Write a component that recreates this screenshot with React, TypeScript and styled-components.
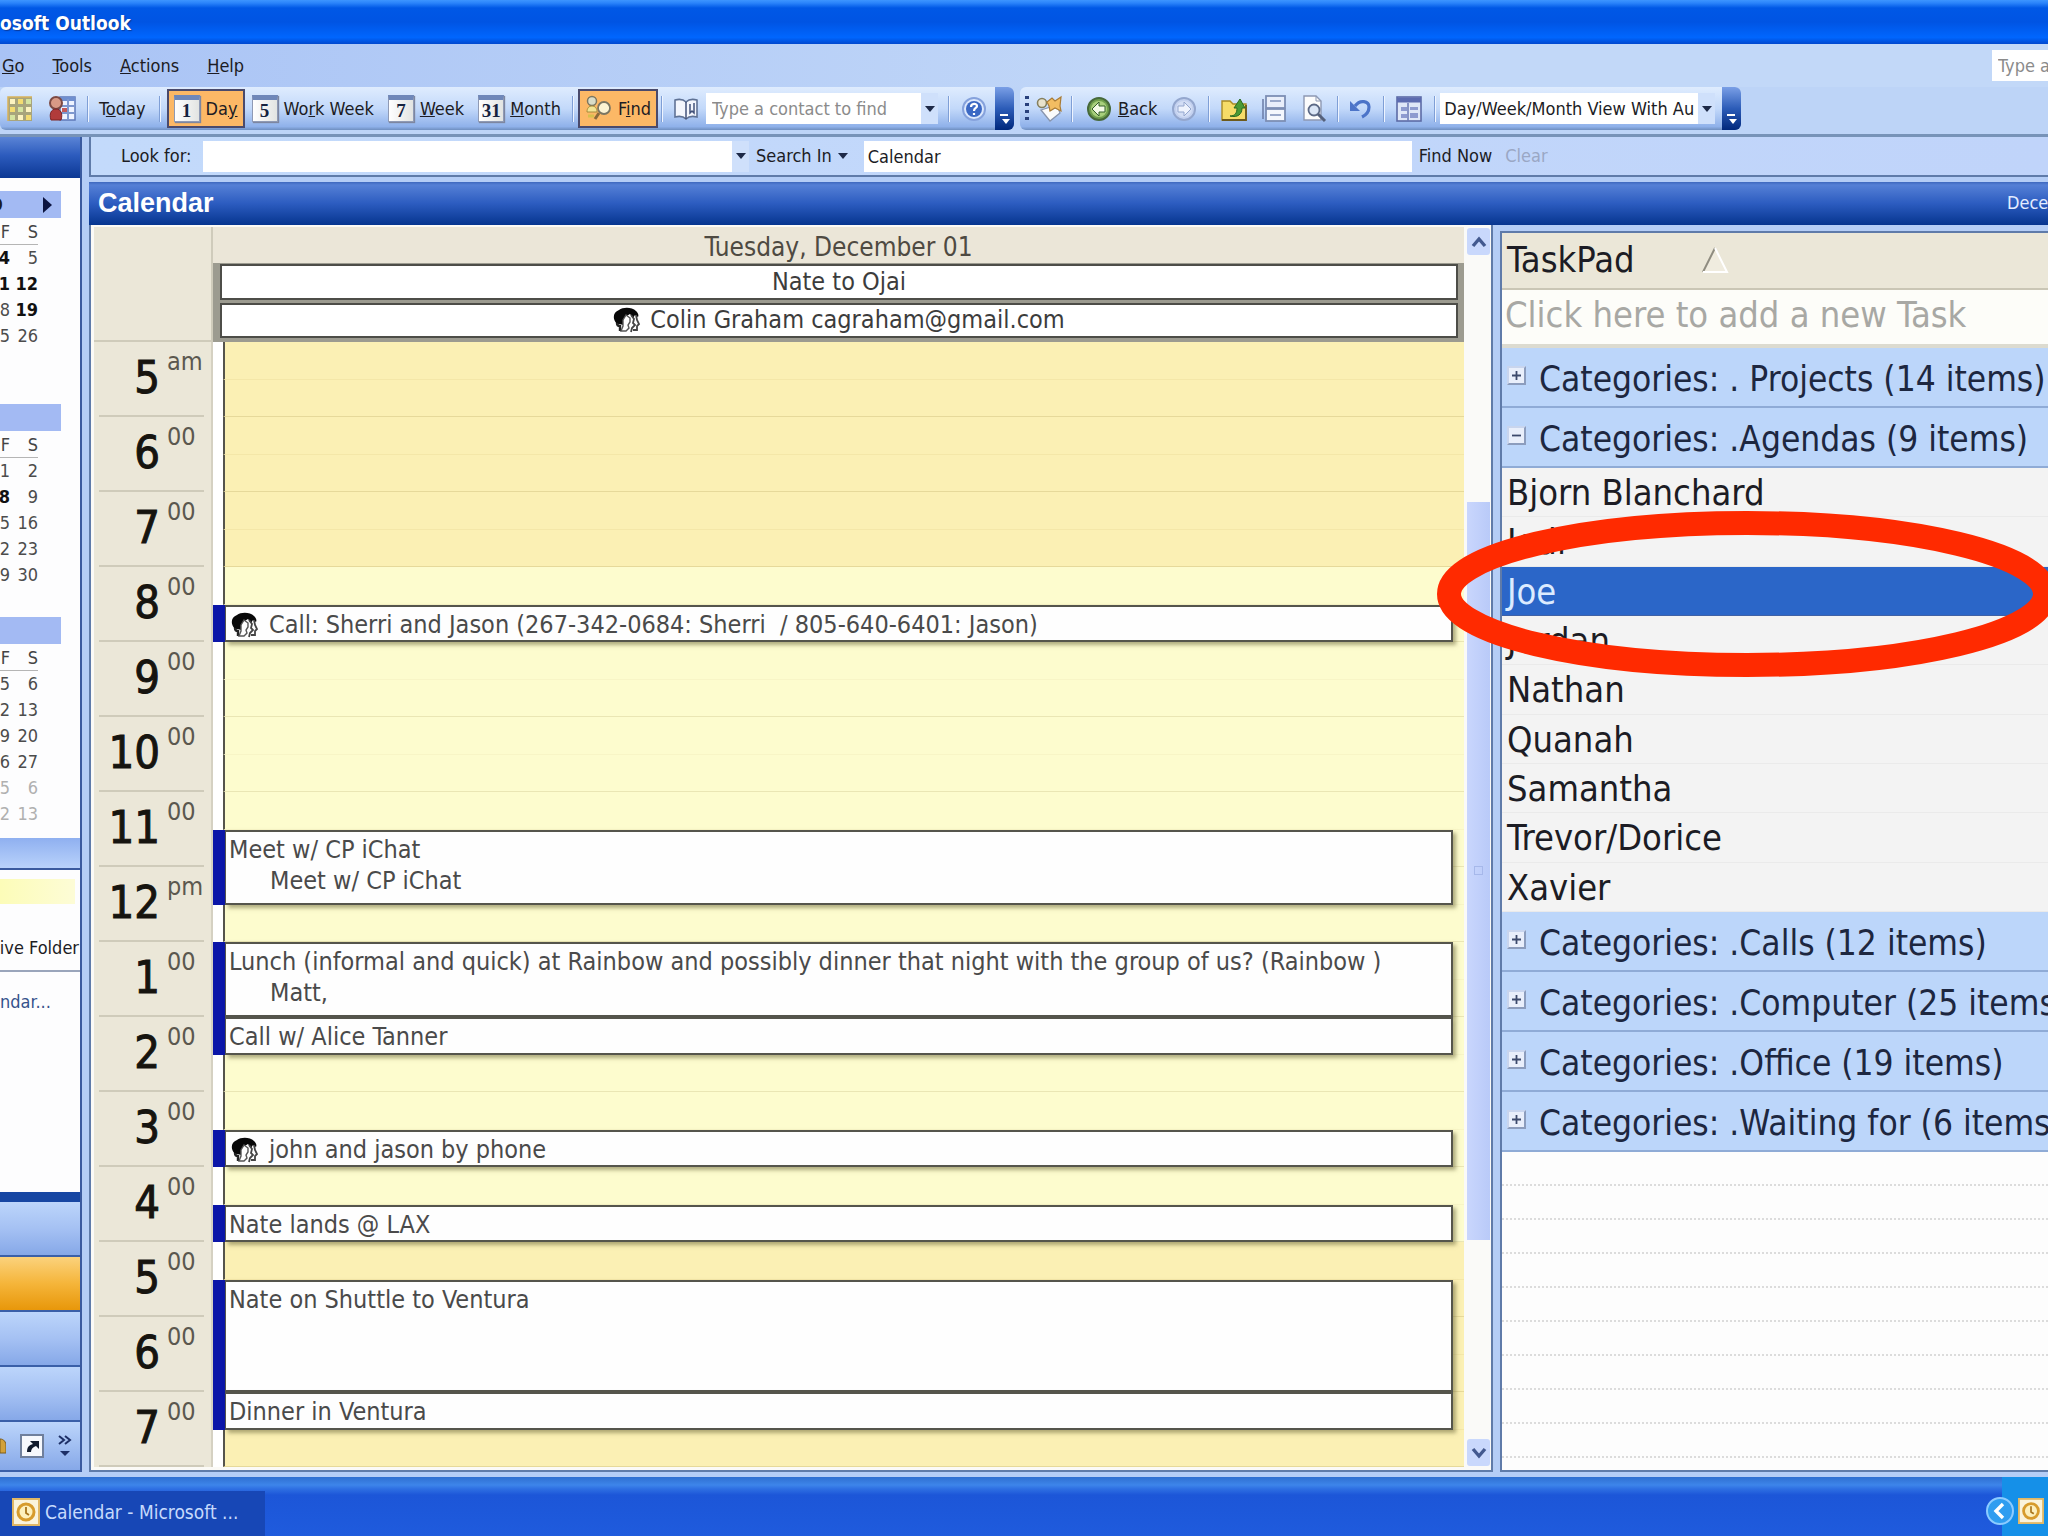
import React from "react";
import styled, { createGlobalStyle, css } from "styled-components";

const ui = `"DejaVu Sans Condensed", "Noto Sans", sans-serif`;

const Global = createGlobalStyle`
  *, *::before, *::after { box-sizing: border-box; }
  body { margin: 0; overflow: hidden; background: #b9d2f8; font-family: ${ui}; color: #1c1c24; }
  button, input, select { font: inherit; color: inherit; margin: 0; border: 0; border-radius: 0; outline: 0; }
  button { background: none; padding: 0; }
  table { border-collapse: collapse; }
  svg { flex: none; }
`;

const Window = styled.div`
  height: 100vh;
  display: flex;
  flex-direction: column;
  overflow: hidden;
  font-size: 18px;
  line-height: 24px;
  white-space: nowrap;
  position: relative;
`;

/* ---------- title, menu, toolbars ---------- */

const TitleBar = styled.header`
  flex: none;
  height: 44px;
  display: flex;
  align-items: center;
  background: linear-gradient(#3d95ff 0, #2a84fb 3px, #0058e6 8px, #0054e3 50%, #0066fe 85%, #0048cf 100%);
`;

const Title = styled.h1`
  margin: 0;
  padding-top: 2px;
  font: bold 19px/24px ${ui};
  color: #fff;
  text-shadow: 1px 1px 1px #0a3a9a;
`;

const MenuBar = styled.nav`
  flex: none;
  height: 43px;
  display: flex;
  align-items: center;
  gap: 28px;
  padding-left: 2px;
  background: linear-gradient(90deg, #a9c3f5, #c2d8f8 60%);
`;

const MenuItem = styled.button`
  height: 28px;
`;

const QuestionBox = styled.input`
  margin-left: auto;
  width: 56px;
  height: 31px;
  padding: 0 0 0 6px;
  background: #fff;
  &::placeholder { color: #8b8b8b; opacity: 1; }
`;

const ToolbarRow = styled.div`
  flex: none;
  height: 50px;
  display: flex;
  align-items: flex-start;
  gap: 6px;
  background: #bdd4f7;
  border-bottom: 3px solid #7793b8;
`;

const Toolbar = styled.div`
  height: 43px;
  display: flex;
  align-items: center;
  border-radius: 6px;
  background: linear-gradient(#dfecfe, #c3d9fa 50%, #8fb1ea 92%, #6f8fc0);
  overflow: hidden;
`;

const Separator = styled.span<{ $gap?: number }>`
  width: 2px;
  height: 26px;
  margin: 0 ${(p) => p.$gap ?? 8}px;
  background: #7f9fd6;
  border-right: 1px solid #eef4ff;
`;

const ToolButton = styled.button<{ $active?: boolean }>`
  height: 39px;
  display: flex;
  align-items: center;
  gap: 6px;
  padding: 0 5px;
  border: 2px solid transparent;
  ${(p) =>
    p.$active &&
    css`
      background: #fcb866;
      border-color: #4a4a6c;
    `}
`;

const DateTile = styled.span`
  width: 26px;
  height: 27px;
  border: 1px solid #8f9ab4;
  border-top: 5px solid #6f87b9;
  background: linear-gradient(90deg, #fff, #e2e4e2);
  font: bold 19px/21px "Liberation Serif", serif;
  text-align: center;
  color: #15233f;
  box-shadow: 1px 1px 1px #7d86a0;
`;

const ComboBox = styled.div<{ $width: number }>`
  width: ${(p) => p.$width}px;
  height: 31px;
  display: flex;
  background: #fff;
`;

const ComboInput = styled.input`
  flex: 1;
  min-width: 0;
  padding: 0 6px;
  background: #fff;
  &::placeholder { color: #8b8b8b; opacity: 1; }
`;

const ComboSelect = styled.select`
  flex: 1;
  min-width: 0;
  padding: 0 4px;
  appearance: none;
  background: #fff;
  overflow: hidden;
`;

const DropButton = styled.button`
  width: 17px;
  display: flex;
  align-items: center;
  justify-content: center;
  background: #cfe0fb;
`;

const Overflow = styled.button`
  align-self: stretch;
  width: 19px;
  margin-left: 7px;
  display: flex;
  align-items: flex-end;
  justify-content: center;
  padding-bottom: 4px;
  background: linear-gradient(#7a9fe6, #2c5cb8 50%, #00287c);
`;

const Grip = styled.span`
  width: 4px;
  height: 26px;
  margin: 0 6px 0 5px;
  background: repeating-linear-gradient(#29417c 0 3px, transparent 3px 7px);
`;

/* ---------- body ---------- */

const Body = styled.div`
  flex: 1;
  min-height: 0;
  display: flex;
  gap: 7px;
  padding-bottom: 5px;
  background: #b4cdf6;
`;

const Sidebar = styled.aside`
  flex: none;
  width: 82px;
  display: flex;
  flex-direction: column;
  border-right: 2px solid #3a5a9f;
  background: #fdfdfe;
  overflow: hidden;
`;

const SidebarHeader = styled.div`
  height: 41px;
  background: linear-gradient(#5a84d6, #2c5bbd 45%, #0c3894);
`;

const Months = styled.div`
  height: 660px;
  padding-top: 13px;
`;

const Month = styled.section`
  width: 61px;
  height: 213px;
`;

const MonthBar = styled.div`
  height: 27px;
  display: flex;
  align-items: center;
  justify-content: flex-end;
  gap: 40px;
  padding-right: 9px;
  background: #a3baf3;
  font-weight: bold;
`;

const MonthTable = styled.table`
  width: 56px;
  margin-left: -18px;
  border-spacing: 0;
  line-height: 22px;
  th { font-weight: normal; height: 26px; padding: 3px 0 0; text-align: right; color: #444; }
  thead { border-bottom: 1px solid #b5b5b5; }
`;

const DayCell = styled.td<{ $bold?: boolean; $dim?: boolean }>`
  height: 26px;
  width: 28px;
  padding: 2px 0 0;
  text-align: right;
  font-weight: ${(p) => (p.$bold ? "bold" : "normal")};
  color: ${(p) => (p.$dim ? "#b0b0b0" : p.$bold ? "#111" : "#4c4c4c")};
`;

const PaneBar = styled.div`
  height: 32px;
  background: linear-gradient(#8fb0f0, #b9d2fb);
  border-bottom: 2px solid #3a5a9f;
`;

const CurrentView = styled.div`
  height: 25px;
  margin: 9px 5px 0 0;
  background: linear-gradient(90deg, #fcfcb8, #fdfcd6);
`;

const PaneText = styled.div`
  display: flex;
  justify-content: flex-end;
  height: 68px;
  padding: 32px 1px 0 0;
  border-bottom: 2px solid #9aa5bb;
`;

const PaneLink = styled.a`
  display: block;
  padding-top: 18px;
  color: #35528c;
  text-decoration: none;
`;

const NavButtons = styled.div`
  margin-top: auto;
  border-top: 10px solid #1746a3;
`;

const NavButton = styled.button<{ $active?: boolean }>`
  display: block;
  width: 100%;
  height: 55px;
  border-bottom: 2px solid #3a5fa8;
  background: ${(p) =>
    p.$active
      ? "linear-gradient(#fbd27c, #f5b53a 50%, #e8970a)"
      : "linear-gradient(#bcd5fb, #a5c1f3 50%, #86a8e8)"};
`;

const NavFooter = styled.div`
  height: 50px;
  display: flex;
  align-items: center;
  gap: 14px;
  background: linear-gradient(#bcd5fb, #86a8e8);
  border-bottom: 2px solid #3a5fa8;
`;

const Main = styled.main`
  flex: 1;
  min-width: 0;
  display: flex;
  flex-direction: column;
`;

const FindBar = styled.form`
  height: 40px;
  flex: none;
  display: flex;
  align-items: center;
  border: 2px solid #5f7ba9;
  border-top: 0;
  border-right: 0;
  background: linear-gradient(90deg, #c3dafb, #c0d4fa);
`;

const FindLabel = styled.label`
  width: 112px;
  padding-left: 30px;
`;

const FindText = styled.button<{ $dim?: boolean }>`
  display: flex;
  align-items: center;
  gap: 6px;
  margin-left: 7px;
  margin-right: 6px;
  color: ${(p) => (p.$dim ? "#9aa7c4" : "inherit")};
`;

const ScopeInput = styled.input`
  width: 548px;
  height: 31px;
  margin-left: 10px;
  padding: 0 4px;
  background: #fff;
`;

const FolderHeader = styled.div`
  flex: none;
  height: 43px;
  margin-top: 5px;
  display: flex;
  align-items: center;
  justify-content: space-between;
  padding: 0 0 2px 9px;
  background: linear-gradient(#3e68be 0, #5580d6 3px, #2c5cc0 50%, #06358f);
  color: #e3ecff;
  overflow: hidden;
`;

const FolderName = styled.h2`
  margin: 0;
  font: bold 27px/36px "Liberation Sans", Roboto, sans-serif;
  color: #fff;
`;

const HeaderDate = styled.span`
  width: 41px;
`;

const Content = styled.div`
  flex: 1;
  min-height: 0;
  display: flex;
  gap: 7px;
`;

const DayPane = styled.section`
  flex: 1;
  min-width: 0;
  display: flex;
  background: #fbfaf6;
  border: 2px solid #5f7ba9;
  border-top: 0;
  padding-left: 3px;
`;

const DayGrid = styled.div`
  flex: 1;
  min-width: 0;
  display: grid;
  grid-template-columns: 119px minmax(0, 1fr);
  grid-template-rows: 117px minmax(0, 1fr);
  padding-bottom: 3px;
`;

const Corner = styled.div`
  margin-top: 2px;
  background: #ebe7d8;
  border-right: 2px solid #cfcbbb;
  border-bottom: 2px solid #cfcbba;
`;

const AllDay = styled.div`
  margin-top: 2px;
  display: flex;
  flex-direction: column;
  background: #ebe6d8;
`;

const DateHeading = styled.h3`
  margin: 0;
  height: 36px;
  font: normal 26px/40px ${ui};
  text-align: center;
  color: #4e4a42;
`;

const AllDayList = styled.div`
  flex: 1;
  display: flex;
  flex-direction: column;
  gap: 3px;
  padding: 1px 6px 4px 7px;
  background: #9c9b90;
`;

const AllDayItem = styled.div`
  flex: 1;
  display: flex;
  align-items: center;
  justify-content: center;
  gap: 9px;
  background: #fff;
  border: 2px solid #4d4d48;
  font-size: 25px;
  color: #3c3c3c;
`;

const Ruler = styled.div`
  display: grid;
  grid-template-rows: repeat(15, minmax(0, 1fr));
  background: #ebe7d8;
  border-right: 2px solid #d5d1c2;
  padding: 0 4px 0 5px;
`;

const Hour = styled.div`
  display: flex;
  justify-content: flex-end;
  gap: 7px;
  margin-right: 3px;
  border-bottom: 2px solid #cfcbba;
  font-size: 45px;
  line-height: 72px;
  color: #16140f;
  -webkit-text-stroke: 1px #16140f;
`;

const Minutes = styled.span`
  width: 37px;
  font-size: 25px;
  line-height: 40px;
  color: #5b584f;
  -webkit-text-stroke: 0;
`;

const Lane = styled.div`
  display: grid;
  grid-template-columns: 12px minmax(0, 1fr) 11px;
  grid-template-rows: repeat(30, minmax(0, 1fr));
  background: #fff;
`;

const Slot = styled.div<{ $row: number; $work: boolean; $hourEnd: boolean }>`
  grid-area: ${(p) => p.$row} / 2 / auto / 4;
  border-left: 2px solid #55544c;
  margin-left: -2px;
  background: ${(p) => (p.$work ? "#fdfcce" : "#fbf0b4")};
  border-bottom: 1px solid ${(p) => (p.$hourEnd ? (p.$work ? "#eae6b4" : "#e6d99a") : p.$work ? "#f8f5c6" : "#f4e7a8")};
`;

const Busy = styled.div<{ $row: number; $span: number }>`
  grid-area: ${(p) => p.$row} / 1 / span ${(p) => p.$span} / 2;
  background: #0b16a8;
`;

const Appointment = styled.article<{ $row: number; $span: number }>`
  grid-area: ${(p) => p.$row} / 2 / span ${(p) => p.$span} / 3;
  z-index: 1;
  display: flex;
  align-items: flex-start;
  gap: 10px;
  min-height: 0;
  padding: 2px 3px;
  background: #fefefe;
  border: 2px solid #55554c;
  border-left-width: 1px;
  box-shadow: 3px 3px 4px rgba(110, 105, 60, 0.55);
  font-size: 25px;
  line-height: 31px;
  color: #4a4a4a;

  svg {
    margin: 3px 0 0 2px;
  }
`;

const Notes = styled.div`
  padding-left: 41px;
`;

const Pre = styled.span`
  white-space: pre;
`;

/* ---------- scroll bar ---------- */

const ScrollBar = styled.div`
  flex: none;
  width: 27px;
  display: flex;
  flex-direction: column;
  padding: 3px 1px 4px 3px;
  background: #fafaf8;
`;

const ScrollButton = styled.button`
  height: 27px;
  display: flex;
  align-items: center;
  justify-content: center;
  background: #c9d8fc;
  border-radius: 3px;
`;

const ScrollGap = styled.div<{ $grow: number }>`
  flex: ${(p) => p.$grow} 0 0;
`;

const Thumb = styled.div`
  flex: 739 0 0;
  display: flex;
  align-items: center;
  justify-content: center;
  background: linear-gradient(90deg, #c9d6fd, #b9caf8);
`;

const ThumbMark = styled.span`
  width: 9px;
  height: 9px;
  border: 1px solid #a6b8ea;
`;

/* ---------- task pad ---------- */

const TaskPane = styled.section`
  flex: none;
  width: 548px;
  margin-top: 6px;
  display: flex;
  flex-direction: column;
  border: 2px solid #5f7ba9;
  border-right: 0;
  background: #fdfdfd;
  font-size: 36px;
  line-height: 48px;
  overflow: hidden;
`;

const TaskHeader = styled.button`
  flex: none;
  height: 57px;
  display: flex;
  align-items: center;
  gap: 66px;
  padding: 0 0 2px 5px;
  background: #ebe7d8;
  border-bottom: 2px solid #cac6b5;
`;

const NewTask = styled.input`
  flex: none;
  width: 100%;
  height: 58px;
  padding: 0 0 6px 3px;
  background: #fdfdf9;
  border-bottom: 4px solid #dcdbd0;
  &::placeholder { color: #a8a8a4; opacity: 1; }
`;

const Category = styled.button`
  flex: none;
  height: 60px;
  display: flex;
  align-items: center;
  gap: 13px;
  padding: 4px 0 0 5px;
  background: #bcd6fa;
  border-bottom: 2px solid #8fabd6;
  font-size: 35px;
  color: #1d2740;
`;

const Box = styled.span`
  flex: none;
  width: 19px;
  height: 19px;
  margin-bottom: 8px;
  border: 2px solid #8c9dbd;
  border-top-color: #c8d5ee;
  border-left-color: #c8d5ee;
  background: #e9effb;
  display: flex;
  align-items: center;
  justify-content: center;
`;

const TaskList = styled.ul`
  flex: none;
  height: 444px;
  margin: 0;
  padding: 0;
  display: grid;
  grid-auto-rows: minmax(0, 1fr);
  list-style: none;
  background: #f3f3f3;
`;

const Task = styled.li<{ $selected?: boolean }>`
  padding: 1px 0 0 5px;
  border-bottom: 1px solid #eaeaea;
  ${(p) =>
    p.$selected &&
    css`
      background: #2b66c8;
      border-color: #3f61a6;
      color: #dcebff;
    `}
`;

const BlankRow = styled.div`
  flex: none;
  height: 34px;
  border-bottom: 2px dotted #dcdcdc;
`;

const Highlight = styled.svg`
  position: absolute;
  right: -9px;
  top: 510px;
  width: 620px;
  height: 168px;
  z-index: 5;
  pointer-events: none;
`;

/* ---------- task bar ---------- */

const TaskBar = styled.footer`
  flex: none;
  height: 59px;
  display: flex;
  align-items: stretch;
  background: linear-gradient(#2f6fd0 0, #3d85ea 8px, #2e6fe2 12px, #1c56d8 18px, #1f5bdd 100%);
`;

const TaskBarButton = styled.button`
  width: 265px;
  margin-top: 14px;
  display: flex;
  align-items: center;
  gap: 5px;
  padding: 0 0 4px 12px;
  background: #1747b6;
  font-size: 19px;
  color: #c6dafc;
`;

const Tray = styled.div`
  margin-left: auto;
  width: 62px;
  display: flex;
  align-items: center;
  gap: 4px;
  padding-top: 8px;
  background: linear-gradient(90deg, transparent 16px, #1590e8 16px);
`;

/* ---------- drawings ---------- */

const Arrow = ({ size = 10 }: { size?: number }) => (
  <svg width={size} height="6" viewBox="0 0 10 6">
    <path d="M0 0h10L5 6z" fill="#1d2947" />
  </svg>
);

const People = () => (
  <svg width="28" height="26" viewBox="0 0 28 26">
    <path d="M4 17C-1 12 0 5 6 3c4-3 13-3 17 1 2 2 3 4 2 6l-3-2-2 3-3-4-5 3-2 5v3l-3-1z" fill="#080808" />
    <path d="M4 16c0 2 1 3 3 3v5" fill="none" stroke="#222" strokeWidth="2.4" />
    <path d="M10 13l3-5 4 3v4l-2 3 1 3-3 3H8l2-5z" fill="#fff" stroke="#555" strokeWidth="1.4" />
    <path d="M18 8l3 4-1 4 2 2-3 3-1 4M23 8l1 5 2 4-2 2v4h-4" fill="none" stroke="#444" strokeWidth="1.8" />
  </svg>
);

const GridIcon = () => (
  <svg width="26" height="26" viewBox="0 0 26 26">
    <rect x="1" y="1" width="24" height="24" fill="#a9a57c" />
    {[0, 1, 2].map((r) =>
      [0, 1, 2].map((c) => (
        <rect key={`${r}${c}`} x={3 + c * 8} y={3 + r * 8} width="5" height="5" fill={["#fdf3c0", "#f4dc71", "#d5e4a0"][(r + c) % 3]} />
      ))
    )}
    <path d="M1 25V1h24" fill="none" stroke="#d8b25a" strokeWidth="1.5" />
  </svg>
);

const ScheduleIcon = () => (
  <svg width="30" height="27" viewBox="0 0 30 27">
    <rect x="13" y="2" width="15" height="23" fill="#eef3ff" stroke="#5d78b8" strokeWidth="1.5" />
    <path d="M13 4h15" stroke="#6f8fd0" strokeWidth="4" />
    <path d="M14 11h14M14 18h14M21 4v20" stroke="#7e98cf" strokeWidth="2" />
    <path d="M15 13h5v4h-5z" fill="#c25a5a" />
    <circle cx="9" cy="8" r="6" fill="#d99a86" stroke="#7c4a44" strokeWidth="2" />
    <path d="M4 25c-2-6 0-11 5-11s7 5 5 11z" fill="#b13b3b" stroke="#7d2222" />
  </svg>
);

const FindIcon = () => (
  <svg width="27" height="27" viewBox="0 0 27 27">
    <circle cx="7" cy="6" r="4.5" fill="#d9dcc8" stroke="#7b7660" strokeWidth="1.5" />
    <path d="M2 17c0-4 2-6 5-6s5 2 5 6z" fill="#f2e493" stroke="#a68a3a" />
    <circle cx="19" cy="13" r="6" fill="#fdf3d2" stroke="#7c7662" strokeWidth="1.8" />
    <path d="M14 18l-4 6" stroke="#8a6a3a" strokeWidth="3" />
    <path d="M3 21h6" stroke="#d6c04c" strokeWidth="3" />
  </svg>
);

const BookIcon = () => (
  <svg width="26" height="24" viewBox="0 0 26 24">
    <path d="M13 5C10 2 6 2 2 3v17c4-1 8-1 11 2 3-3 7-3 11-2V3c-4-1-8-1-11 2z" fill="#f3f6fd" stroke="#5f7295" strokeWidth="1.6" />
    <path d="M13 5v17M17 7v9l2-2 2 2V6" fill="none" stroke="#42527a" strokeWidth="1.5" />
  </svg>
);

const HelpIcon = () => (
  <svg width="28" height="28" viewBox="0 0 28 28">
    <circle cx="14" cy="14" r="11" fill="#dce8fd" stroke="#86a2dc" strokeWidth="2" />
    <circle cx="14" cy="14" r="8" fill="#3c69c4" />
    <path d="M11 12c0-4 6-4 6-1 0 2-3 2-3 5M14 18v2" fill="none" stroke="#fff" strokeWidth="2.2" />
  </svg>
);

const OverflowMark = () => (
  <svg width="12" height="13" viewBox="0 0 12 13">
    <path d="M1 2h8" stroke="#fff" strokeWidth="2" />
    <path d="M3 6h8l-4 5z" fill="#fff" />
  </svg>
);

const MailIcon = () => (
  <svg width="30" height="28" viewBox="0 0 30 28">
    <path d="M6 15l16-5 3 8-10 8z" fill="#fbfbfb" stroke="#8995ad" strokeWidth="1.3" />
    <circle cx="7" cy="8" r="4.5" fill="#e8e2cc" stroke="#85805f" strokeWidth="1.6" />
    <path d="M12 7l5-4 3 3 6-4-1 9 1 5-6-3-5 3-1-5z" fill="#f2bd62" stroke="#a87b36" strokeWidth="1.2" />
  </svg>
);

const NavArrow = ({ back }: { back?: boolean }) => (
  <svg width="26" height="26" viewBox="0 0 26 26">
    <circle cx="13" cy="13" r="11" fill={back ? "#6f9f4c" : "#c3d1ef"} stroke={back ? "#47693a" : "#94a7ce"} strokeWidth="2" />
    <circle cx="13" cy="13" r="8" fill={back ? "#a8cf7c" : "#d3def5"} />
    <path
      d={back ? "M6 13l7-7v4h6v6h-6v4z" : "M20 13l-7-7v4H7v6h6v4z"}
      fill={back ? "#f4fbe6" : "#eef3fd"}
      stroke={back ? "#35602a" : "#94a7ce"}
    />
  </svg>
);

const FolderIcon = () => (
  <svg width="26" height="26" viewBox="0 0 26 26">
    <path d="M1 5h8l3 3h13v16H1z" fill="#f6dc68" stroke="#a98a24" strokeWidth="1.4" />
    <path d="M1 24h24V9" fill="none" stroke="#6d5a1c" strokeWidth="1.8" />
    <path d="M9 20c5 0 7-3 7-8h-3l6-9 5 9h-3c0 6-4 10-12 8z" fill="#4a9a35" stroke="#2a6a20" />
  </svg>
);

const ListIcon = () => (
  <svg width="26" height="28" viewBox="0 0 26 28">
    <path d="M2 4v20" stroke="#6f80aa" strokeWidth="1.6" />
    <rect x="5" y="1" width="19" height="12" fill="#e9eefa" stroke="#7d8eb4" strokeWidth="1.8" />
    <rect x="5" y="14" width="19" height="12" fill="#f4f7fd" stroke="#7d8eb4" strokeWidth="1.8" />
    <path d="M9 6h11M9 20h11" stroke="#9aa9ca" strokeWidth="1.8" />
  </svg>
);

const PreviewIcon = () => (
  <svg width="26" height="28" viewBox="0 0 26 28">
    <path d="M3 1h12l5 5v19H3z" fill="#fcfcfc" stroke="#8d98b2" strokeWidth="1.4" />
    <path d="M15 1v5h5" fill="none" stroke="#8d98b2" />
    <circle cx="13" cy="15" r="5.5" fill="#dbe6f6" stroke="#5d6a86" strokeWidth="1.8" />
    <path d="M17 19l7 7" stroke="#55617c" strokeWidth="3" />
  </svg>
);

const UndoIcon = () => (
  <svg width="24" height="24" viewBox="0 0 24 24">
    <path d="M6 9c5-7 14-5 14 1 0 5-3 8-7 10" fill="none" stroke="#4c74c8" strokeWidth="3.2" />
    <path d="M1 4v10h10z" fill="#4c74c8" />
  </svg>
);

const ScheduleGrid = () => (
  <svg width="28" height="28" viewBox="0 0 28 28">
    <rect x="2" y="2" width="24" height="24" fill="#dfe7f8" stroke="#5c6ba6" strokeWidth="1.6" />
    <path d="M2 5h24" stroke="#5c6bb0" strokeWidth="5" />
    <path d="M6 12h6v4H6zM15 12h8v3h-8zM6 19h6v4H6zM15 18h8v5h-8z" fill="#8e9bd0" />
    <path d="M13 8v18" stroke="#6a78b4" strokeWidth="1.5" />
  </svg>
);

const ClockIcon = ({ size = 28 }: { size?: number }) => (
  <svg width={size} height={size} viewBox="0 0 28 28">
    <rect x="1" y="1" width="26" height="26" fill="#faf3dc" stroke="#e0b765" strokeWidth="2" />
    <circle cx="14" cy="14" r="8" fill="#fdf0bd" stroke="#d79b2c" strokeWidth="3" />
    <path d="M14 9v6l3 2" fill="none" stroke="#a8741b" strokeWidth="1.8" />
  </svg>
);

const Chevron = ({ down }: { down?: boolean }) => (
  <svg width="16" height="12" viewBox="0 0 16 12">
    <path d={down ? "M2 2l6 7 6-7" : "M2 10l6-7 6 7"} fill="none" stroke="#43598f" strokeWidth="3.4" />
  </svg>
);

const ShortcutIcon = () => (
  <svg width="24" height="24" viewBox="0 0 24 24">
    <rect x="1" y="1" width="22" height="22" fill="#f6f8fc" stroke="#6f7f9c" strokeWidth="2" />
    <path d="M7 18c0-5 2-7 6-8l-3-3h9v8l-3-3c-3 1-5 3-5 6z" fill="#101a2c" />
  </svg>
);

/* ---------- data ---------- */

type Week = { f: string; s: string; fb?: boolean; sb?: boolean; dim?: boolean };

const months: { year?: string; weeks: Week[] }[] = [
  {
    year: "9",
    weeks: [
      { f: "4", s: "5", fb: true },
      { f: "1", s: "12", fb: true, sb: true },
      { f: "8", s: "19", sb: true },
      { f: "5", s: "26" },
    ],
  },
  {
    weeks: [
      { f: "1", s: "2" },
      { f: "8", s: "9", fb: true },
      { f: "5", s: "16" },
      { f: "2", s: "23" },
      { f: "9", s: "30" },
    ],
  },
  {
    weeks: [
      { f: "5", s: "6" },
      { f: "2", s: "13" },
      { f: "9", s: "20" },
      { f: "6", s: "27" },
      { f: "5", s: "6", dim: true },
      { f: "2", s: "13", dim: true },
    ],
  },
];

const hours = ["5", "6", "7", "8", "9", "10", "11", "12", "1", "2", "3", "4", "5", "6", "7"];

const appointments: { row: number; span: number; title: string; notes?: string; meeting?: boolean }[] = [
  { row: 8, span: 1, title: "Call: Sherri and Jason (267-342-0684: Sherri  / 805-640-6401: Jason)", meeting: true },
  { row: 14, span: 2, title: "Meet w/ CP iChat", notes: "Meet w/ CP iChat" },
  {
    row: 17,
    span: 2,
    title: "Lunch (informal and quick) at Rainbow and possibly dinner that night with the group of us? (Rainbow )",
    notes: "Matt,",
  },
  { row: 19, span: 1, title: "Call w/ Alice Tanner" },
  { row: 22, span: 1, title: "john and jason by phone", meeting: true },
  { row: 24, span: 1, title: "Nate lands @ LAX" },
  { row: 26, span: 3, title: "Nate on Shuttle to Ventura" },
  { row: 29, span: 1, title: "Dinner in Ventura" },
];

const agendas = ["Bjorn Blanchard", "Jodi", "Joe", "Jordan", "Nathan", "Quanah", "Samantha", "Trevor/Dorice", "Xavier"];

const CategoryRow = ({ label, open }: { label: string; open?: boolean }) => (
  <Category aria-expanded={!!open}>
    <Box>
      <svg width="9" height="9" viewBox="0 0 9 9">
        <path d={open ? "M0 4.5h9" : "M0 4.5h9M4.5 0v9"} stroke="#3c4a6c" strokeWidth="1.8" />
      </svg>
    </Box>
    Categories: {label}
  </Category>
);

export default function App() {
  return (
    <>
      <Global />
      <Window>
        <TitleBar>
          <Title>osoft Outlook</Title>
        </TitleBar>

        <MenuBar>
          <MenuItem><u>G</u>o</MenuItem>
          <MenuItem><u>T</u>ools</MenuItem>
          <MenuItem><u>A</u>ctions</MenuItem>
          <MenuItem><u>H</u>elp</MenuItem>
          <QuestionBox aria-label="Type a question for help" placeholder="Type a" />
        </MenuBar>

        <ToolbarRow>
          <Toolbar>
            <ToolButton aria-label="New appointment"><GridIcon /></ToolButton>
            <ToolButton aria-label="Plan a meeting"><ScheduleIcon /></ToolButton>
            <Separator $gap={3} />
            <ToolButton><span>T<u>o</u>day</span></ToolButton>
            <Separator $gap={6} />
            <ToolButton $active><DateTile>1</DateTile><span>Da<u>y</u></span></ToolButton>
            <ToolButton><DateTile>5</DateTile><span>Wo<u>r</u>k Week</span></ToolButton>
            <ToolButton><DateTile>7</DateTile><span><u>W</u>eek</span></ToolButton>
            <ToolButton><DateTile>31</DateTile><span><u>M</u>onth</span></ToolButton>
            <Separator $gap={4} />
            <ToolButton $active><FindIcon /><span>F<u>i</u>nd</span></ToolButton>
            <Separator $gap={3} />
            <ToolButton aria-label="Address book"><BookIcon /></ToolButton>
            <ComboBox $width={232}>
              <ComboInput aria-label="Contact" placeholder="Type a contact to find" />
              <DropButton aria-label="Recent contacts"><Arrow /></DropButton>
            </ComboBox>
            <Separator $gap={10} />
            <HelpIcon />
            <Overflow aria-label="Toolbar options"><OverflowMark /></Overflow>
          </Toolbar>
          <Toolbar>
            <Grip />
            <MailIcon />
            <Separator $gap={6} />
            <ToolButton><NavArrow back /><span><u>B</u>ack</span></ToolButton>
            <ToolButton aria-label="Forward"><NavArrow /></ToolButton>
            <Separator $gap={4} />
            <ToolButton aria-label="Up one level"><FolderIcon /></ToolButton>
            <ToolButton aria-label="Reading pane"><ListIcon /></ToolButton>
            <ToolButton aria-label="Print preview"><PreviewIcon /></ToolButton>
            <Separator $gap={3} />
            <ToolButton aria-label="Undo"><UndoIcon /></ToolButton>
            <Separator $gap={3} />
            <ToolButton aria-label="Group schedules"><ScheduleGrid /></ToolButton>
            <Separator $gap={4} />
            <ComboBox $width={275}>
              <ComboSelect aria-label="Current view">
                <option>Day/Week/Month View With AutoPreview</option>
              </ComboSelect>
              <DropButton aria-label="Choose view"><Arrow /></DropButton>
            </ComboBox>
            <Overflow aria-label="Toolbar options"><OverflowMark /></Overflow>
          </Toolbar>
        </ToolbarRow>

        <Body>
          <Sidebar>
            <SidebarHeader />
            <Months>
              {months.map((m, i) => (
                <Month key={i}>
                  <MonthBar>
                    {m.year && (
                      <>
                        <span>{m.year}</span>
                        <svg width="9" height="16" viewBox="0 0 9 16"><path d="M0 0l9 8-9 8z" fill="#0c1440" /></svg>
                      </>
                    )}
                  </MonthBar>
                  <MonthTable>
                    <thead><tr><th>F</th><th>S</th></tr></thead>
                    <tbody>
                      {m.weeks.map((w, j) => (
                        <tr key={j}>
                          <DayCell $bold={w.fb} $dim={w.dim}>{w.f}</DayCell>
                          <DayCell $bold={w.sb} $dim={w.dim}>{w.s}</DayCell>
                        </tr>
                      ))}
                    </tbody>
                  </MonthTable>
                </Month>
              ))}
            </Months>
            <PaneBar />
            <CurrentView />
            <PaneText>ive Folder</PaneText>
            <PaneLink href="#">ndar...</PaneLink>
            <NavButtons>
              <NavButton aria-label="Mail" />
              <NavButton aria-label="Calendar" $active />
              <NavButton aria-label="Contacts" />
              <NavButton aria-label="Tasks" />
              <NavFooter>
                <svg width="6" height="20" viewBox="0 0 6 20"><path d="M0 3c4 0 6 3 6 7v7H0z" fill="#d3a13a" stroke="#7d5c1a" /></svg>
                <ShortcutIcon />
                <svg width="14" height="24" viewBox="0 0 14 24">
                  <path d="M1 2l5 4-5 4M7 2l5 4-5 4" fill="none" stroke="#1d2f66" strokeWidth="2" />
                  <path d="M2 17h10l-5 5z" fill="#1d2f66" />
                </svg>
              </NavFooter>
            </NavButtons>
          </Sidebar>

          <Main>
            <FindBar onSubmit={(e) => e.preventDefault()}>
              <FindLabel htmlFor="look">Look for:</FindLabel>
              <ComboBox $width={546}>
                <ComboInput id="look" />
                <DropButton type="button" aria-label="Recent searches"><Arrow /></DropButton>
              </ComboBox>
              <FindText type="button">Search In <Arrow /></FindText>
              <ScopeInput aria-label="Search in" defaultValue="Calendar" />
              <FindText>Find Now</FindText>
              <FindText type="reset" $dim>Clear</FindText>
            </FindBar>
            <FolderHeader>
              <FolderName>Calendar</FolderName>
              <HeaderDate>Dece</HeaderDate>
            </FolderHeader>

            <Content>
              <DayPane>
                <DayGrid>
                  <Corner />
                  <AllDay>
                    <DateHeading>Tuesday, December 01</DateHeading>
                    <AllDayList>
                      <AllDayItem>Nate to Ojai</AllDayItem>
                      <AllDayItem><People />Colin Graham cagraham@gmail.com</AllDayItem>
                    </AllDayList>
                  </AllDay>
                  <Ruler>
                    {hours.map((h, i) => (
                      <Hour key={i}>
                        {h}
                        <Minutes>{i === 0 ? "am" : h === "12" ? "pm" : "00"}</Minutes>
                      </Hour>
                    ))}
                  </Ruler>
                  <Lane>
                    {Array.from({ length: 30 }, (_, i) => (
                      <Slot key={i} $row={i + 1} $work={i >= 6 && i < 24} $hourEnd={i % 2 === 1} />
                    ))}
                    {appointments.map((a) => (
                      <React.Fragment key={a.row}>
                        <Busy $row={a.row} $span={a.span} />
                        <Appointment $row={a.row} $span={a.span}>
                          {a.meeting && <People />}
                          <div>
                            <Pre>{a.title}</Pre>
                            {a.notes && <Notes>{a.notes}</Notes>}
                          </div>
                        </Appointment>
                      </React.Fragment>
                    ))}
                  </Lane>
                </DayGrid>
                <ScrollBar>
                  <ScrollButton aria-label="Scroll up"><Chevron /></ScrollButton>
                  <ScrollGap $grow={247} />
                  <Thumb><ThumbMark /></Thumb>
                  <ScrollGap $grow={199} />
                  <ScrollButton aria-label="Scroll down"><Chevron down /></ScrollButton>
                </ScrollBar>
              </DayPane>

              <TaskPane>
                <TaskHeader>
                  TaskPad
                  <svg width="28" height="28" viewBox="0 0 28 28">
                    <path d="M14 2l12 24H2z" fill="#f0ecdf" />
                    <path d="M2 26L14 2" stroke="#8f8c80" strokeWidth="2" />
                    <path d="M14 2l12 24H2" fill="none" stroke="#fff" strokeWidth="2" />
                  </svg>
                </TaskHeader>
                <NewTask aria-label="New task" placeholder="Click here to add a new Task" />
                <CategoryRow label=". Projects (14 items)" />
                <CategoryRow label=".Agendas (9 items)" open />
                <TaskList>
                  {agendas.map((name) => (
                    <Task key={name} $selected={name === "Joe"}>{name}</Task>
                  ))}
                </TaskList>
                <CategoryRow label=".Calls (12 items)" />
                <CategoryRow label=".Computer (25 items)" />
                <CategoryRow label=".Office (19 items)" />
                <CategoryRow label=".Waiting for (6 items)" />
                {Array.from({ length: 9 }, (_, i) => <BlankRow key={i} />)}
              </TaskPane>
            </Content>
          </Main>
        </Body>

        <TaskBar>
          <TaskBarButton><ClockIcon />Calendar - Microsoft ...</TaskBarButton>
          <Tray>
            <svg width="28" height="32" viewBox="0 0 28 32">
              <circle cx="14" cy="16" r="13" fill="#2f9df0" stroke="#8ccbff" strokeWidth="2" />
              <path d="M17 9l-7 7 7 7" fill="none" stroke="#fff" strokeWidth="3.4" />
            </svg>
            <ClockIcon size={26} />
          </Tray>
        </TaskBar>

        <Highlight viewBox="0 0 620 168">
          <ellipse cx="310" cy="84" rx="298" ry="71" fill="none" stroke="#ff2a00" strokeWidth="24" />
        </Highlight>
      </Window>
    </>
  );
}
